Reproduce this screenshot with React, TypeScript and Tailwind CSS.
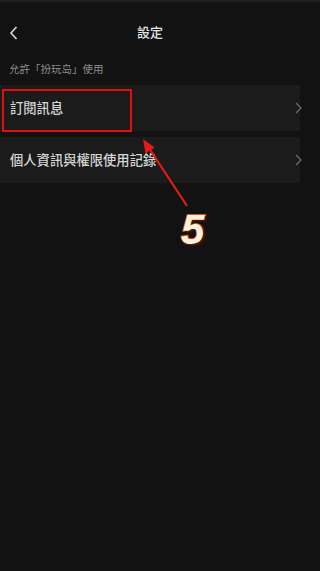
const font = { fontFamily: '"Noto Sans CJK TC", "Noto Sans", sans-serif' };

const rows = ["訂閱訊息", "個人資訊與權限使用記錄"];

const Chevron = () => (
  <svg width="8" height="12" viewBox="0 0 8 12" className="shrink-0 -mr-[3px]">
    <path d="M1 1l5 5-5 5" fill="none" stroke="#6b6b6b" strokeWidth="1.3" />
  </svg>
);

export default function App() {
  return (
    <div className="relative w-full min-w-[300px] h-[571px] overflow-hidden bg-[#121212] border-t-2 border-[#1f1f1f]" style={font}>
      {/* Header */}
      <header className="relative flex items-center justify-center w-[300px] h-[60px]">
        <svg width="9" height="14" viewBox="0 0 9 14" className="absolute left-[9px] top-[24px]">
          <path d="M7.5 1L2 7l5.5 6" fill="none" stroke="#d8d8d8" strokeWidth="1.6" />
        </svg>
        <h1 className="text-[13px] leading-none font-medium text-[#e4e4e4] -mt-[1px]">設定</h1>
      </header>

      <p className="px-[9px] pt-[2px] pb-[10px] text-[10.5px] leading-none text-[#8c8c8c]">允許「扮玩岛」使用</p>

      <div className="flex flex-col gap-[6px] w-[300px]">
        {rows.map((label) => (
          <div key={label} className="flex items-center justify-between h-[46px] pl-[10px] bg-[#1b1b1b]">
            <span className="text-[13.3px] leading-none font-medium text-[#d6d6d6]">{label}</span>
            <Chevron />
          </div>
        ))}
      </div>

      {/* annotation box */}
      <div className="absolute left-[2px] top-[87px] w-[130px] h-[43px] border-2 border-[#e01010]" />

      {/* annotation arrow */}
      <svg className="absolute left-0 top-0" width="300" height="571" viewBox="0 0 300 571">
        <line x1="187" y1="204" x2="147" y2="143" stroke="#e51a1a" strokeWidth="2.2" />
        <path d="M143 137l2.5 14.5 9-6z" fill="#e51a1a" />
      </svg>

      {/* annotation number */}
      <span
        className="absolute left-[181px] top-[207px] text-[42px] leading-none font-black italic text-[#fff1dc]"
        style={{
          fontFamily: '"Liberation Sans", Arial, sans-serif',
          WebkitTextStroke: "2px #d4541c",
          paintOrder: "stroke fill",
          textShadow: "1px 1px 0 #4a1a08, 2px 2px 0 #3a1206",
        }}
      >
        5
      </span>
    </div>
  );
}
